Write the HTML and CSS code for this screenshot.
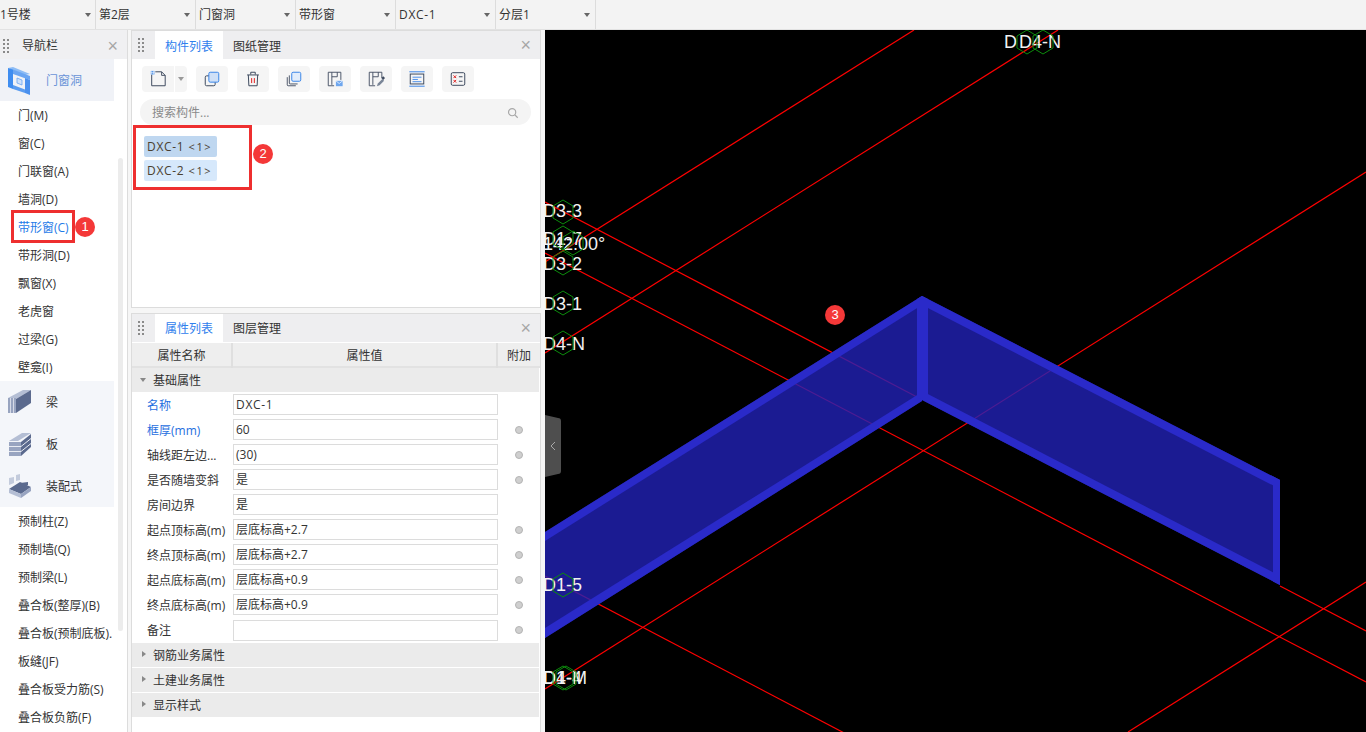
FILE: index.html
```html
<!DOCTYPE html>
<html lang="zh">
<head>
<meta charset="utf-8">
<title>门窗洞</title>
<link rel="stylesheet" href="styles.css">
</head>
<body>
<header class="topbar">
  <div class="sel sel-first"><span>1号楼</span><i class="caret"></i></div>
  <div class="sel"><span>第2层</span><i class="caret"></i></div>
  <div class="sel"><span>门窗洞</span><i class="caret"></i></div>
  <div class="sel"><span>带形窗</span><i class="caret"></i></div>
  <div class="sel"><span class="wide">DXC-1</span><i class="caret"></i></div>
  <div class="sel"><span>分层1</span><i class="caret"></i></div>
</header>
<main class="main">
  <nav class="nav">
    <div class="nav-head"><i class="grip"></i><span class="nav-title">导航栏</span><span class="close">×</span></div>
    <div class="nav-body">
      <div class="nav-track"></div>
      <div class="nav-group nav-group-on">
        <svg class="nav-ic" viewBox="0 0 24 24"><path d="M0 0l5-1 17 7-5 1z" fill="#8dbcf5"/><path d="M0 0l5 1.500V21l-5-2z" fill="#3f8df0"/><path d="M5 1.500L22 8v4L5 6z" fill="#6aa5f2"/><path d="M17 10l5 2v15l-5-2z" fill="#4a90ee"/><path d="M5 17l12 4.500V25L5 21z" fill="#5a9cf0"/><path d="M9 10l5 2v5l-5-2z" fill="#cfe2fb" stroke="#6aa5f2" stroke-width=".8"/></svg>
        <span>门窗洞</span>
      </div>
      <div class="nav-item">门(M)</div>
      <div class="nav-item">窗(C)</div>
      <div class="nav-item">门联窗(A)</div>
      <div class="nav-item">墙洞(D)</div>
      <div class="nav-item nav-item-on">带形窗(C)<b class="callout callout-nav"></b><b class="badge badge-nav">1</b></div>
      <div class="nav-item">带形洞(D)</div>
      <div class="nav-item">飘窗(X)</div>
      <div class="nav-item">老虎窗</div>
      <div class="nav-item">过梁(G)</div>
      <div class="nav-item">壁龛(I)</div>
      <div class="nav-groups">
        <div class="nav-group">
          <svg class="nav-ic" viewBox="0 0 24 24"><path d="M0 8L15 0h8L8 9z" fill="#b4bed4"/><path d="M8 9L23 0v13L8 23z" fill="#5b6a8e"/><path d="M0 8h8v15H0z" fill="#98a4c0"/><path d="M2.500 8v15M5.500 8v15" stroke="#e6e9f1" stroke-width=".8"/></svg>
          <span class="dark">梁</span>
        </div>
        <div class="nav-group">
          <svg class="nav-ic" viewBox="0 0 24 24"><path d="M1 9l13-8h9L10 9z" fill="#b4bed4"/><path d="M1 10h12v14H1z" fill="#98a4c0"/><path d="M13 10l10-8v13l-10 9z" fill="#5b6a8e"/><path d="M1 14.500h12l10-8M1 19.500h12l10-8" stroke="#e8ebf2" stroke-width="1" fill="none"/></svg>
          <span class="dark">板</span>
        </div>
        <div class="nav-group">
          <svg class="nav-ic" viewBox="0 0 24 24"><path d="M1 15l11-7 11 5-10 7z" fill="#5b6a8e"/><path d="M1 15l12 5v4L1 19z" fill="#b4bed4"/><path d="M13 20l10-7v4l-10 7z" fill="#98a4c0"/><path d="M1 4l5-1v6L1 11zM8 1l4-1v6L8 7z" fill="#c3cbdc"/><path d="M12 9l8-1v3l-6 2z" fill="#5b6a8e"/></svg>
          <span class="dark">装配式</span>
        </div>
      </div>
      <div class="nav-item">预制柱(Z)</div>
      <div class="nav-item">预制墙(Q)</div>
      <div class="nav-item">预制梁(L)</div>
      <div class="nav-item">叠合板(整厚)(B)</div>
      <div class="nav-item">叠合板(预制底板).</div>
      <div class="nav-item">板缝(JF)</div>
      <div class="nav-item">叠合板受力筋(S)</div>
      <div class="nav-item">叠合板负筋(F)</div>
    </div>
  </nav>

  <section class="side">
    <div class="panel panel-list">
      <div class="tabs">
        <i class="grip"></i>
        <span class="tab tab-on">构件列表</span>
        <span class="tab">图纸管理</span>
        <span class="close">×</span>
      </div>
      <div class="tools">
        <div class="split">
          <span class="tool tool-main">
            <svg viewBox="0 0 20 20" class="tic"><path d="M3 5v12.500h15V6l-4-4H7" fill="none" stroke="#3e4a5e" stroke-width="1.100"/><path d="M14 2v4h4" fill="none" stroke="#3e4a5e" stroke-width="1"/><rect x="2" y="1" width="4" height="4" fill="#4a8fe8"/><path d="M3 1v4M5 1v4M2 3h4" stroke="#fff" stroke-width=".6"/></svg>
          </span>
          <span class="tool tool-more"><i class="caret"></i></span>
        </div>
        <span class="tool"><svg viewBox="0 0 20 20" class="tic"><rect x="2.500" y="6.500" width="11" height="11" rx="1.500" fill="none" stroke="#3e4a5e" stroke-width="1.100"/><rect x="6.500" y="2.500" width="11" height="11" rx="1.500" fill="#cfe0f7" stroke="#3b86e8" stroke-width="1.100"/></svg></span>
        <span class="tool"><svg viewBox="0 0 20 20" class="tic"><path d="M3.500 5.500h13M7.500 5V2.500h5V5M4.800 5.500l.6 12h9.200l.6-12" fill="none" stroke="#3e4a5e" stroke-width="1.100"/><path d="M8.500 9v5.500M11.500 9v5.500" stroke="#e02020" stroke-width="1.100"/></svg></span>
        <span class="tool"><svg viewBox="0 0 20 20" class="tic"><path d="M2.500 8v8.500a1 1 0 0 0 1 1H12M4.800 6v8.500a1 1 0 0 0 1 1H14" fill="none" stroke="#3e4a5e" stroke-width="1"/><rect x="7.500" y="2.500" width="10" height="10" rx="1.500" fill="#e2edfb" stroke="#3b86e8" stroke-width="1.100"/></svg></span>
        <span class="tool"><svg viewBox="0 0 20 20" class="tic"><path d="M9 17.500H2.500v-15h14V11M6.500 2.500v14M12.500 2.500v5h-6" fill="none" stroke="#3e4a5e" stroke-width="1"/><rect x="11" y="12" width="7.500" height="6" fill="#6ea6ee"/><path d="M11 12l3.700 3 3.800-3" fill="none" stroke="#fff" stroke-width=".8"/></svg></span>
        <span class="tool"><svg viewBox="0 0 20 20" class="tic"><path d="M9 17.500H2.500v-15h14V9M6.500 2.500v14M12.500 2.500v5h-6" fill="none" stroke="#3e4a5e" stroke-width="1"/><path d="M11 18l1-3 5-5 2 2-5 5z" fill="#7a8698"/><path d="M16 9l2-2 2 2-2 2z" fill="#3e4a5e"/></svg></span>
        <span class="tool"><svg viewBox="0 0 20 20" class="tic"><path d="M1.500 2h17M1.500 18h17" stroke="#3b86e8" stroke-width="1.100"/><rect x="2.500" y="4.500" width="15" height="11" fill="none" stroke="#3e4a5e" stroke-width="1.100"/><path d="M5 8h10M5 10.500h6M5 13h10" stroke="#3b86e8" stroke-width="1"/></svg></span>
        <span class="tool"><svg viewBox="0 0 20 20" class="tic"><rect x="2.500" y="3" width="15" height="14" rx="1.500" fill="none" stroke="#3e4a5e" stroke-width="1.100"/><path d="M5 6l3 3M8 6l-3 3M5 11l3 3M8 11l-3 3" stroke="#e02020" stroke-width="1.100"/><path d="M11 7.500h4M11 12.500h4" stroke="#3e4a5e" stroke-width="1.100"/></svg></span>
      </div>
      <div class="search">
        <span>搜索构件...</span>
        <svg viewBox="0 0 14 14" class="search-ic"><circle cx="6" cy="6" r="4.200" fill="none" stroke="#a8a8a8" stroke-width="1.400"/><path d="M9 9l3.500 3.500" stroke="#a8a8a8" stroke-width="1.400"/></svg>
      </div>
      <div class="list">
        <b class="callout callout-list"></b>
        <b class="badge badge-list">2</b>
        <div class="chip chip-on"><span class="wide">DXC-1</span> <small>&lt;1&gt;</small></div>
        <div class="chip"><span class="wide">DXC-2</span> <small>&lt;1&gt;</small></div>
      </div>
    </div>

    <div class="panel panel-props">
      <div class="tabs">
        <i class="grip"></i>
        <span class="tab tab-on">属性列表</span>
        <span class="tab">图层管理</span>
        <span class="close">×</span>
      </div>
      <div class="thead">
        <span>属性名称</span><span>属性值</span><span>附加</span>
      </div>
      <div class="sect sect-open"><i class="tri tri-open"></i>基础属性</div>
      <div class="row"><span class="lab blue">名称</span><span class="field"><span class="wide">DXC-1</span></span></div>
      <div class="row"><span class="lab blue">框厚(mm)</span><span class="field">60</span><i class="dot"></i></div>
      <div class="row"><span class="lab">轴线距左边...</span><span class="field">(30)</span><i class="dot"></i></div>
      <div class="row"><span class="lab">是否随墙变斜</span><span class="field">是</span><i class="dot"></i></div>
      <div class="row"><span class="lab">房间边界</span><span class="field">是</span></div>
      <div class="row"><span class="lab">起点顶标高(m)</span><span class="field">层底标高+2.7</span><i class="dot"></i></div>
      <div class="row"><span class="lab">终点顶标高(m)</span><span class="field">层底标高+2.7</span><i class="dot"></i></div>
      <div class="row"><span class="lab">起点底标高(m)</span><span class="field">层底标高+0.9</span><i class="dot"></i></div>
      <div class="row"><span class="lab">终点底标高(m)</span><span class="field">层底标高+0.9</span><i class="dot"></i></div>
      <div class="row row-last"><span class="lab">备注</span><span class="field"></span><i class="dot"></i></div>
      <div class="sect"><i class="tri"></i>钢筋业务属性</div>
      <div class="sect"><i class="tri"></i>土建业务属性</div>
      <div class="sect"><i class="tri"></i>显示样式</div>
    </div>
  </section>

  <section class="canvas">
    <svg class="scene" viewBox="545 30 821 702" width="821" height="702">
      <g stroke="#ff0000" stroke-width="1.200" fill="none">
        <path d="M545 353L1058 30"/>
        <path d="M545 262L914 30"/>
        <path d="M545 689L1366 172"/>
        <path d="M1128 732L1366 582"/>
        <path d="M545 202L917 397"/>
        <path d="M1280 586L1366 631"/>
        <path d="M545 253L1366 682"/>
        <path d="M545 576L850 736"/>
      </g>
      <g fill="rgb(34,34,182)" fill-opacity=".8">
        <path d="M545 532L922 296V401L545 638z"/>
        <path d="M922 296L1280 480V585L922 400z"/>
      </g>
      <g fill="#2a2ac9">
        <path d="M545 532L922 296V305L545 541z"/>
        <path d="M545 628L922 392V401L545 638z"/>
        <path d="M922 296L1280 480V489L922 305z"/>
        <path d="M922 391L1280 576V585L922 400z"/>
        <path d="M917 299L922 296L928 299V396L922 400L917 397z"/>
        <path d="M1273 476.400L1280 480V585L1273 581.400z"/>
      </g>
      <g class="axis">
        <text x="543" y="217">D3-3</text>
        <text x="543" y="245">D1-7</text>
        <text x="543" y="250">142.00°</text>
        <text x="543" y="270">D3-2</text>
        <text x="543" y="310">D3-1</text>
        <text x="543" y="350">D4-N</text>
        <text x="543" y="591">D1-5</text>
        <text x="543" y="684">D1-4</text>
        <text x="543" y="684">D4-M</text>
        <text x="1004" y="48">D</text>
        <text x="1019" y="48">D4-N</text>
      </g>
      <g class="hex">
        <path d="M563 200l10 6v12l-10 6-10-6v-12z"/>
        <path d="M563 226l10 6v12l-10 6-10-6v-12z"/>
        <path d="M573 231l10 6v12l-10 6-10-6v-12z"/>
        <path d="M563 251l10 6v12l-10 6-10-6v-12z"/>
        <path d="M563 291l10 6v12l-10 6-10-6v-12z"/>
        <path d="M563 331l10 6v12l-10 6-10-6v-12z"/>
        <path d="M563 573l10 6v12l-10 6-10-6v-12z"/>
        <path d="M563 666l10 6v12l-10 6-10-6v-12z"/>
        <path d="M566 666l10 6v12l-10 6-10-6v-12z"/>
        <path d="M1027 30l10 6v12l-10 6-10-6v-12z"/>
        <path d="M1043 30l10 6v12l-10 6-10-6v-12z"/>
      </g>
      <path d="M545 415l13 3a3 3 0 0 1 3 3v50a3 3 0 0 1-3 3l-13 3z" fill="#4e4e4e"/>
      <path d="M555 442l-4 4 4 4" fill="none" stroke="#a8a8a8" stroke-width="1"/>
    </svg>
    <b class="badge badge-canvas">3</b>
  </section>
</main>
</body>
</html>
```

FILE: styles.css
```css
* { box-sizing: border-box; }
html, body { margin: 0; height: 100%; }
body {
  width: 1366px;
  height: 732px;
  overflow: hidden;
  display: flex;
  flex-direction: column;
  background: #f6f6f6;
  color: #333;
  font: 12px/1 "Open Sans", "Noto Sans CJK SC", "Liberation Sans", sans-serif;
}
i, b { font-style: normal; font-weight: 400; }
.wide { letter-spacing: .7px; }

.topbar {
  height: 30px;
  flex: none;
  display: flex;
  background: #f3f3f3;
  border-bottom: 1px solid #e2e2e2;
}
.sel {
  width: 100px;
  display: flex;
  align-items: center;
  justify-content: space-between;
  padding: 1px 5px 0 3px;
  border-right: 1px solid #dcdcdc;
  font-size: 12px;
  color: #333;
}
.sel-first { width: 96px; padding-left: 0; padding-right: 4px; }
.caret {
  width: 0;
  height: 0;
  border: 3px solid transparent;
  border-top: 4px solid #666;
  border-bottom: 0;
}

.main { flex: 1; display: flex; min-height: 0; }

.nav {
  width: 128px;
  flex: none;
  background: #fff;
  border-right: 1px solid #dcdcdc;
  overflow: hidden;
}
.nav-head {
  height: 29px;
  display: flex;
  align-items: center;
  background: #f0f0f2;
  padding: 2px 0 0 3px;
  position: relative;
}
.nav-title { margin-left: 13px; }
.grip {
  width: 6px;
  height: 14px;
  flex: none;
  background-image: radial-gradient(circle at 1px 1px, #8a8a8a 1px, transparent 1.100px);
  background-size: 4px 4px;
}
.close {
  margin-left: auto;
  margin-right: 9px;
  font: 18px/1 "Liberation Sans", sans-serif;
  color: #a6a6a6;
}
.nav-body { position: relative; }
.nav-track {
  position: absolute;
  left: 118px;
  top: 99px;
  width: 5px;
  height: 473px;
  border-radius: 3px;
  background: #ececec;
}
.nav-group {
  width: 114px;
  height: 42px;
  display: flex;
  align-items: center;
  gap: 14px;
  padding-left: 8px;
  background: #f4f6fa;
  color: #6a94d8;
}
.nav-group span { padding-top: 2px; }
.nav-group-on { background: #f0f2f7; }
.nav-groups { background: #f4f6fa; width: 114px; }
.nav-ic { width: 24px; height: 24px; flex: none; display: block; overflow: visible; }
.dark { color: #333; }
.nav-item {
  height: 28px;
  line-height: 29px;
  padding-left: 18px;
  color: #333;
  white-space: nowrap;
  position: relative;
}
.nav-item-on { color: #1f7be8; }

.callout {
  position: absolute;
  border: 3px solid #ee2f2f;
  pointer-events: none;
}
.callout-nav { left: 11px; top: -3px; width: 64px; height: 33px; }
.callout-list { left: 1px; top: 0; width: 119px; height: 65px; }
.badge {
  position: absolute;
  width: 20px;
  height: 20px;
  border-radius: 50%;
  background: #f43838;
  color: #fff;
  font: 13px/20px "Liberation Sans", sans-serif;
  text-align: center;
}
.badge-nav { left: 75px; top: 4px; }
.badge-list { left: 121px; top: 19px; }
.badge-canvas { left: 280px; top: 275px; }

.side {
  width: 410px;
  margin-left: 3px;
  flex: none;
  display: flex;
  flex-direction: column;
  gap: 5px;
}
.panel {
  background: #fff;
  border: 1px solid #dcdcdc;
  border-bottom: 0;
}
.panel-list { height: 278px; border-bottom: 1px solid #dcdcdc; }
.panel-props { flex: 1; }
.tabs {
  height: 28px;
  display: flex;
  align-items: center;
  background: #eeeef0;
  padding-left: 6px;
}
.tab {
  height: 100%;
  padding: 9px 10px 0;
  font-size: 12px;
  color: #333;
}
.panel-list .tab { padding-top: 10px; }
.tab-on {
  background: #fff;
  color: #2f80ed;
  margin-left: 11px;
  width: 68px;
}
.tools {
  height: 40px;
  padding: 7px 0 7px 10px;
  display: flex;
  gap: 9px;
}
.split { display: flex; gap: 1px; }
.tool {
  width: 32px;
  height: 26px;
  background: #f5f5f5;
  border-radius: 4px;
  display: flex;
  align-items: center;
  justify-content: center;
}
.tool-main { border-radius: 4px 0 0 4px; }
.tool-more { width: 12px; border-radius: 0 4px 4px 0; }
.tool-more .caret { border-top-color: #999; }
.tic { width: 18px; height: 18px; display: block; }
.search {
  height: 26px;
  margin: 0 9px 0 8px;
  padding: 1px 12px 0;
  background: #f4f4f4;
  border-radius: 13px;
  display: flex;
  align-items: center;
  justify-content: space-between;
  color: #8a8a8a;
}
.search-ic { width: 12px; height: 12px; }
.list {
  position: relative;
  padding: 11px 0 0 12px;
  display: flex;
  flex-direction: column;
  align-items: flex-start;
  gap: 3px;
}
.chip {
  width: 73px;
  height: 21px;
  padding-left: 3px;
  line-height: 22px;
  background: #d6e8fb;
  border-radius: 2px;
  color: #4a4030;
  white-space: nowrap;
}
.chip-on { background: #bfd7f0; }
.chip small { font-size: 11px; margin-left: 1px; letter-spacing: 1.600px; }

.thead {
  height: 25px;
  margin-top: 1px;
  display: grid;
  grid-template-columns: 101px 265px 42px;
  background: #eeeeee;
  border-bottom: 2px solid #e2e2e2;
  text-align: center;
  line-height: 25px;
  color: #333;
}
.thead span { border-right: 2px solid #dfdfdf; }
.thead span:last-child { border-right: 0; }
.sect {
  height: 24px;
  margin-right: 1px;
  margin-bottom: 1px;
  display: flex;
  align-items: center;
  padding: 2px 0 0 21px;
  background: #ebebeb;
  position: relative;
  color: #333;
}
.sect-open { margin-bottom: 0; }
.tri {
  position: absolute;
  left: 10px;
  top: 8px;
  width: 0;
  height: 0;
  border: 3px solid transparent;
  border-left: 4px solid #888;
  border-right: 0;
}
.tri-open {
  left: 8px;
  top: 10px;
  border: 3px solid transparent;
  border-top: 4px solid #888;
  border-bottom: 0;
}
.row {
  height: 25px;
  display: grid;
  grid-template-columns: 101px 265px 42px;
  align-items: center;
}
.row-last { height: 26px; }
.lab { padding: 2px 0 0 15px; white-space: nowrap; color: #333; }
.blue { color: #1f6fe0; }
.field {
  height: 21px;
  border: 1px solid #dcdcdc;
  padding-left: 2px;
  line-height: 20px;
  color: #333;
  background: #fff;
}
.dot {
  width: 8px;
  height: 8px;
  justify-self: center;
  border-radius: 50%;
  background: #cfcfcf;
  border: 1px solid #b4b4b4;
}

.canvas {
  width: 821px;
  margin-left: 4px;
  flex: none;
  background: #000;
  position: relative;
  overflow: hidden;
}
.scene { display: block; }
.hex path { fill: none; stroke: #0c8c0c; stroke-width: 1; }
.axis text {
  fill: #f2f2f2;
  font: 18px "Liberation Sans", sans-serif;
}
```
